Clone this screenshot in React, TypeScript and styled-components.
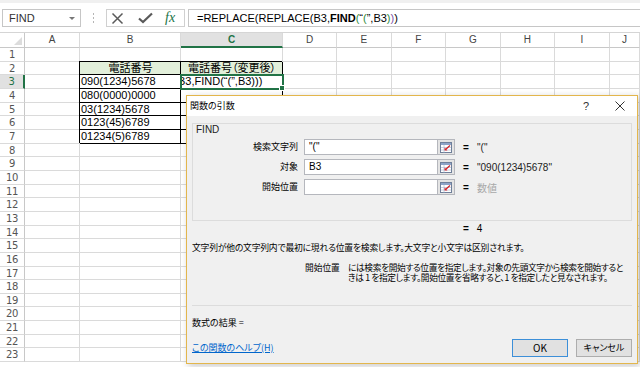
import React from "react";
import styled, { createGlobalStyle, css } from "styled-components";

const GlobalStyle = createGlobalStyle`
  html, body { margin: 0; padding: 0; background: #fff; }
  body { font-family: "Liberation Sans", "Noto Sans CJK JP", sans-serif; overflow: hidden; }
  #root { width: 640px; height: 367px; }
`;

const Screen = styled.div`
  position: relative;
  width: 640px;
  height: 367px;
  overflow: hidden;
  background: #fff;
`;

/* ---------- formula bar ---------- */
const FormulaBar = styled.div`
  height: 33px;
  box-sizing: border-box;
  border-top: 3px solid #f0f0f0;
  border-bottom: 1px solid #d5d5d5;
  display: flex;
  align-items: flex-start;
  padding: 6px 0 0 2px;
`;

const NameBox = styled.div`
  width: 79px;
  height: 18px;
  box-sizing: border-box;
  border: 1px solid #c6c6c6;
  display: flex;
  align-items: center;
  justify-content: space-between;
  padding: 0 5px 0 6px;
  font: 11px "Liberation Sans", sans-serif;
  color: #333;
`;

const Caret = styled.span`
  width: 0;
  height: 0;
  border-left: 3px solid transparent;
  border-right: 3px solid transparent;
  border-top: 3px solid #777;
`;

const Grip = styled.div`
  width: 25px;
  height: 18px;
  display: flex;
  flex-direction: column;
  align-items: center;
  justify-content: center;
  gap: 2px;
  span {
    width: 1px;
    height: 2px;
    background: #b5b5b5;
  }
`;

const IconBox = styled.div`
  width: 79px;
  height: 18px;
  box-sizing: border-box;
  border: 1px solid #d0d0d0;
  display: flex;
  align-items: center;
  padding-left: 4px;
  gap: 14px;
`;

const FxText = styled.span`
  font: italic 14px "Liberation Serif", serif;
  color: #217346;
  margin-left: -2px;
  line-height: 16px;
`;

const FormulaInput = styled.div`
  flex: 1;
  margin-left: 3px;
  height: 18px;
  box-sizing: border-box;
  border: 1px solid #c6c6c6;
  border-right: none;
  padding-left: 8px;
  font: 11px/16px "Liberation Sans", sans-serif;
  color: #000;
  white-space: nowrap;
`;

const Tint = styled.span<{ $c: string }>`
  color: ${({ $c }) => $c};
`;

const Bold = styled.b`
  font-weight: bold;
`;

/* ---------- sheet ---------- */
const Sheet = styled.div`
  display: grid;
  grid-template-columns: 25px 55px 101px 102px 54px 54.7px 54.3px 54.7px 54.3px 55px 1fr;
  grid-template-rows: 15px repeat(23, 13.67px);
`;

const Corner = styled.div`
  box-sizing: border-box;
  border-right: 1px solid #c8c8c8;
  border-bottom: 1px solid #c8c8c8;
  position: relative;
  &::after {
    content: "";
    position: absolute;
    right: 2px;
    bottom: 2px;
    border-left: 8px solid transparent;
    border-bottom: 8px solid #dcdcdc;
  }
`;

const ColHead = styled.div<{ $active?: boolean }>`
  box-sizing: border-box;
  border-right: 1px solid #dadada;
  border-bottom: 1px solid #c8c8c8;
  font: 10px/14px "Liberation Sans", sans-serif;
  color: #444;
  text-align: center;
  ${({ $active }) =>
    $active &&
    css`
      background: #e1e1e1;
      color: #217346;
      font-weight: bold;
      border-bottom: 2px solid #217346;
      line-height: 13px;
    `}
`;

const RowHead = styled.div<{ $active?: boolean }>`
  box-sizing: border-box;
  border-right: 1px solid #c8c8c8;
  border-bottom: 1px solid #dadada;
  font: 10px/13px "DejaVu Sans", sans-serif;
  letter-spacing: -0.3px;
  color: #555;
  text-align: center;
  ${({ $active }) =>
    $active &&
    css`
      background: #e1e1e1;
      color: #217346;
      border-right: 2px solid #217346;
    `}
`;

type Variant = "plain" | "head" | "boxed" | "active";

const Cell = styled.div<{ $variant: Variant }>`
  box-sizing: border-box;
  position: relative;
  border-right: 1px solid #dadada;
  border-bottom: 1px solid #dadada;
  font: 11px/13px "Liberation Sans", "Noto Sans CJK JP", sans-serif;
  font-feature-settings: "palt";
  color: #000;
  min-width: 0;
  ${({ $variant }) =>
    $variant === "head" &&
    css`
      background: #e2efda;
      border-color: #000;
      box-shadow: -1px -1px 0 #000;
      text-align: center;
    `}
  ${({ $variant }) =>
    $variant === "boxed" &&
    css`
      border-color: #000;
      box-shadow: -1px -1px 0 #000;
    `}
  ${({ $variant }) =>
    $variant === "active" &&
    css`
      border-color: #000;
      outline: 2px solid #217346;
      outline-offset: -1px;
      z-index: 2;
    `}
`;

const CellText = styled.span<{ $shift?: number }>`
  display: block;
  overflow: hidden;
  white-space: nowrap;
  padding-left: 1px;
  text-indent: ${({ $shift }) => $shift ?? 0}px;
`;

const Handle = styled.span`
  position: absolute;
  right: -3px;
  bottom: -3px;
  width: 4px;
  height: 4px;
  background: #217346;
  border: 1px solid #fff;
`;

/* ---------- dialog ---------- */
const Dialog = styled.div`
  position: absolute;
  left: 186px;
  top: 95px;
  width: 452px;
  height: 269px;
  box-sizing: border-box;
  border: 1px solid #e3b64c;
  background: #f0f0f0;
  box-shadow: 2px 2px 7px rgba(0, 0, 0, 0.22);
  font-family: "Noto Sans CJK JP", sans-serif;
  font-feature-settings: "palt";
  font-size: 9px;
  color: #000;
  display: flex;
  flex-direction: column;
  z-index: 5;
`;

const TitleBar = styled.div`
  height: 20px;
  flex-shrink: 0;
  background: #fff;
  display: flex;
  align-items: center;
  padding-left: 3px;
`;

const Title = styled.div`
  flex: 1;
  font-size: 9px;
  line-height: 12px;
`;

const TitleButton = styled.div`
  width: 34px;
  height: 20px;
  display: flex;
  align-items: center;
  justify-content: center;
  font: 11px "Liberation Sans", sans-serif;
  color: #333;
`;

const Body = styled.div`
  padding: 0 5px;
  display: flex;
  flex-direction: column;
`;

const Group = styled.div`
  margin-top: 7px;
  height: 98px;
  box-sizing: border-box;
  border: 1px solid #dcdcdc;
  padding-left: 3px;
`;

const Legend = styled.div`
  height: 15px;
  padding-top: 1px;
  box-sizing: border-box;
  font: 10px/10px "Liberation Sans", sans-serif;
  color: #222;
`;

const ArgRow = styled.div`
  display: flex;
  align-items: center;
  height: 16px;
  margin-bottom: 4px;
`;

const ArgLabel = styled.div`
  width: 102px;
  margin-right: 6px;
  text-align: right;
  line-height: 12px;
`;

const ArgInput = styled.div`
  width: 134px;
  height: 16px;
  box-sizing: border-box;
  background: #fff;
  border: 1px solid #b5b7bd;
  padding-left: 4px;
  font: 10px/14px "Liberation Sans", sans-serif;
`;

const RefButton = styled.div`
  width: 17px;
  height: 16px;
  box-sizing: border-box;
  border: 1px solid #b5b7bd;
  border-left: none;
  background: #e4e4e4;
  display: flex;
  align-items: center;
  justify-content: center;
`;

const Eq = styled.span`
  margin-left: 8px;
  width: 6px;
  font: bold 10px "Liberation Sans", sans-serif;
`;

const ArgValue = styled.span<{ $muted?: boolean }>`
  margin-left: 8px;
  font: 10px "Liberation Sans", "Noto Sans CJK JP", sans-serif;
  color: ${({ $muted }) => ($muted ? "#a8a8a8" : "#222")};
`;

const ResultLine = styled.div`
  margin-top: 2px;
  height: 12px;
  padding-left: 271px;
  font: 10px/12px "Liberation Sans", sans-serif;
  display: flex;
  gap: 8px;
  b {
    font-weight: bold;
  }
`;

const Desc = styled.div`
  margin-top: 7px;
  height: 12px;
  line-height: 12px;
  font-size: 8.8px;
  letter-spacing: -0.2px;
  white-space: nowrap;
`;

const ParamHelp = styled.div`
  margin-top: 9px;
  display: flex;
  padding-left: 113px;
  line-height: 10px;
  font-size: 8.7px;
`;

const ParamName = styled.div`
  width: 43px;
  flex-shrink: 0;
`;

const ParamText = styled.div`
  white-space: nowrap;
  letter-spacing: -0.35px;
`;

const Separator = styled.div`
  margin-top: 22px;
  height: 1px;
  background: #dcdcdc;
`;

const FormulaResult = styled.div`
  margin-top: 11px;
  height: 12px;
  line-height: 12px;
`;

const Footer = styled.div`
  margin-top: 10px;
  height: 18px;
  display: flex;
  align-items: center;
  gap: 8px;
`;

const HelpLink = styled.a`
  flex: 1;
  color: #0066cc;
  text-decoration: underline;
  line-height: 12px;
  cursor: pointer;
`;

const Button = styled.button<{ $default?: boolean }>`
  width: 56px;
  height: 18px;
  box-sizing: border-box;
  border: 1px solid ${({ $default }) => ($default ? "#3c8fd8" : "#adadad")};
  background: #e1e1e1;
  font-family: "Noto Sans CJK JP", sans-serif;
  font-feature-settings: "palt";
  font-size: ${({ $default }) => ($default ? "10px" : "9px")};
  color: #000;
  padding: 0;
  line-height: 14px;
`;

/* ---------- icons ---------- */
const CancelIcon = () => (
  <svg width="13" height="13" viewBox="0 0 13 13">
    <path d="M1.5 1.5 L11.5 11.5 M11.5 1.5 L1.5 11.5" stroke="#5a5a5a" strokeWidth="1.5" fill="none" />
  </svg>
);

const CheckIcon = () => (
  <svg width="15" height="12" viewBox="0 0 15 12">
    <path d="M1 6.5 L5 10 L14 1.5" stroke="#5a5a5a" strokeWidth="2.2" fill="none" />
  </svg>
);

const CloseIcon = () => (
  <svg width="10" height="10" viewBox="0 0 10 10">
    <path d="M0.5 0.5 L9.5 9.5 M9.5 0.5 L0.5 9.5" stroke="#333" strokeWidth="1" fill="none" />
  </svg>
);

const RefIcon = () => (
  <svg width="12" height="11" viewBox="0 0 12 11">
    <rect x="0.5" y="0.5" width="11" height="10" fill="#fff" stroke="#6f7f99" />
    <rect x="1" y="1" width="10" height="2" fill="#8da3c7" />
    <path d="M1 5.5 H11 M1 8 H11 M4 3 V10.5" stroke="#b8c4d8" strokeWidth="0.8" />
    <path d="M10 3.5 L5.5 7.5" stroke="#d2232a" strokeWidth="1.4" />
    <path d="M4.5 5.5 L4.5 8.5 L7.5 8.5 Z" fill="#d2232a" />
  </svg>
);

/* ---------- data ---------- */
const COLS = ["A", "B", "C", "D", "E", "F", "G", "H", "I", "J"];
const PHONES = ["090(1234)5678", "080(0000)0000", "03(1234)5678", "0123(45)6789", "01234(5)6789"];

function cellInfo(row: number, col: number): { variant: Variant; text?: React.ReactNode; shift?: number } {
  if (row === 2 && col === 1) return { variant: "head", text: "電話番号" };
  if (row === 2 && col === 2) return { variant: "head", text: "電話番号（変更後）" };
  if (row >= 3 && row <= 7 && col === 1) return { variant: "boxed", text: PHONES[row - 3] };
  if (row === 3 && col === 2) return { variant: "active", text: "B3,FIND(“(”,B3)))", shift: -4 };
  if (row >= 4 && row <= 7 && col === 2) return { variant: "boxed" };
  return { variant: "plain" };
}

export default function App() {
  const rows = Array.from({ length: 23 }, (_, i) => i + 1);
  return (
    <Screen>
      <GlobalStyle />
      <FormulaBar>
        <NameBox>
          FIND
          <Caret />
        </NameBox>
        <Grip>
          <span />
          <span />
          <span />
        </Grip>
        <IconBox>
          <CancelIcon />
          <CheckIcon />
          <FxText>fx</FxText>
        </IconBox>
        <FormulaInput>
          =REPLACE(REPLACE(B3,<Bold>FIND</Bold>
          <Tint $c="#2e8b3a">(</Tint>“<Tint $c="#2e8b3a">(</Tint>”,B3<Tint $c="#2e8b3a">)</Tint>
          <Tint $c="#7a4fa8">)</Tint>)
        </FormulaInput>
      </FormulaBar>

      <Sheet>
        <Corner />
        {COLS.map((c) => (
          <ColHead key={c} $active={c === "C"}>
            {c}
          </ColHead>
        ))}
        {rows.map((r) => (
          <React.Fragment key={r}>
            <RowHead $active={r === 3}>{r}</RowHead>
            {COLS.map((c, ci) => {
              const info = cellInfo(r, ci);
              return (
                <Cell key={c} $variant={info.variant}>
                  {info.text && <CellText $shift={info.shift}>{info.text}</CellText>}
                  {info.variant === "active" && <Handle />}
                </Cell>
              );
            })}
          </React.Fragment>
        ))}
      </Sheet>

      <Dialog>
        <TitleBar>
          <Title>関数の引数</Title>
          <TitleButton>?</TitleButton>
          <TitleButton>
            <CloseIcon />
          </TitleButton>
        </TitleBar>
        <Body>
          <Group>
            <Legend>FIND</Legend>
            <ArgRow>
              <ArgLabel>検索文字列</ArgLabel>
              <ArgInput>"("</ArgInput>
              <RefButton>
                <RefIcon />
              </RefButton>
              <Eq>=</Eq>
              <ArgValue>"("</ArgValue>
            </ArgRow>
            <ArgRow>
              <ArgLabel>対象</ArgLabel>
              <ArgInput>B3</ArgInput>
              <RefButton>
                <RefIcon />
              </RefButton>
              <Eq>=</Eq>
              <ArgValue>"090(1234)5678"</ArgValue>
            </ArgRow>
            <ArgRow>
              <ArgLabel>開始位置</ArgLabel>
              <ArgInput />
              <RefButton>
                <RefIcon />
              </RefButton>
              <Eq>=</Eq>
              <ArgValue $muted>数値</ArgValue>
            </ArgRow>
          </Group>
          <ResultLine>
            <b>=</b>
            <span>4</span>
          </ResultLine>
          <Desc>文字列が他の文字列内で最初に現れる位置を検索します。大文字と小文字は区別されます。</Desc>
          <ParamHelp>
            <ParamName>開始位置</ParamName>
            <ParamText>
              には検索を開始する位置を指定します。対象の先頭文字から検索を開始すると
              <br />
              きは 1 を指定します。開始位置を省略すると、1 を指定したと見なされます。
            </ParamText>
          </ParamHelp>
          <Separator />
          <FormulaResult>数式の結果 =</FormulaResult>
          <Footer>
            <HelpLink>この関数のヘルプ(H)</HelpLink>
            <Button $default>OK</Button>
            <Button>キャンセル</Button>
          </Footer>
        </Body>
      </Dialog>
    </Screen>
  );
}
